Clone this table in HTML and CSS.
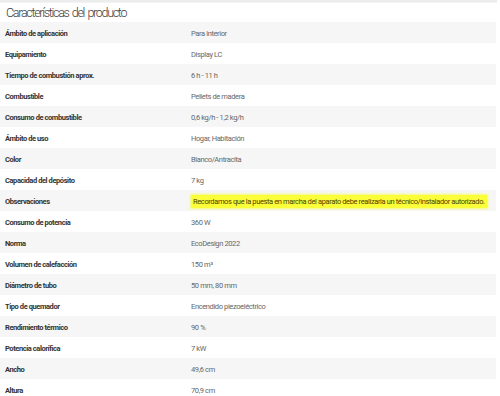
FILE: index.html
```html
<!DOCTYPE html>
<html lang="es">
<head>
<meta charset="utf-8">
<title>Características del producto</title>
<link rel="stylesheet" href="styles.css">
</head>
<body>
<div class="topline"></div>
<h2 class="title">Características del producto</h2>
<div class="specs">
  <div class="row"><span class="k">Ámbito de aplicación</span><span class="v">Para interior</span></div>
  <div class="row"><span class="k">Equipamiento</span><span class="v">Display LC</span></div>
  <div class="row"><span class="k">Tiempo de combustión aprox.</span><span class="v">6 h - 11 h</span></div>
  <div class="row"><span class="k">Combustible</span><span class="v">Pellets de madera</span></div>
  <div class="row"><span class="k">Consumo de combustible</span><span class="v">0,6 kg/h - 1,2 kg/h</span></div>
  <div class="row"><span class="k">Ámbito de uso</span><span class="v">Hogar, Habitación</span></div>
  <div class="row"><span class="k">Color</span><span class="v">Blanco/Antracita</span></div>
  <div class="row"><span class="k">Capacidad del depósito</span><span class="v">7 kg</span></div>
  <div class="row"><span class="k">Observaciones</span><span class="v"><mark class="hl">Recordamos que la puesta en marcha del aparato debe realizarla un técnico/instalador autorizado.</mark></span></div>
  <div class="row"><span class="k">Consumo de potencia</span><span class="v">360 W</span></div>
  <div class="row"><span class="k">Norma</span><span class="v">EcoDesign 2022</span></div>
  <div class="row"><span class="k">Volumen de calefacción</span><span class="v">150 m³</span></div>
  <div class="row"><span class="k">Diámetro de tubo</span><span class="v">50 mm, 80 mm</span></div>
  <div class="row"><span class="k">Tipo de quemador</span><span class="v">Encendido piezoeléctrico</span></div>
  <div class="row"><span class="k">Rendimiento térmico</span><span class="v">90 %</span></div>
  <div class="row"><span class="k">Potencia calorífica</span><span class="v">7 kW</span></div>
  <div class="row"><span class="k">Ancho</span><span class="v">49,6 cm</span></div>
  <div class="row"><span class="k">Altura</span><span class="v">70,9 cm</span></div>
</div>
</body>
</html>
```
FILE: styles.css
```css
html, body {
  margin: 0;
  padding: 0;
  background: #ffffff;
  overflow: hidden;
}
body {
  width: 500px;
  height: 396px;
  font-family: Roboto, "Open Sans", sans-serif;
}
.topline {
  width: 497px;
  height: 2px;
  background: #ececec;
  box-shadow: 0 1px 1px rgba(0,0,0,0.05);
}
.title {
  margin: 0;
  height: 20px;
  padding-left: 6px;
  font-family: Roboto, sans-serif;
  font-weight: 300;
  font-size: 12.5px;
  line-height: 21px;
  color: #3d3d3d;
  letter-spacing: -1.3px;
  word-spacing: 1.5px;
}
.specs {
  width: 496px;
}
.row {
  display: grid;
  grid-template-columns: 186px 1fr;
  align-items: center;
  height: 21px;
  box-sizing: border-box;
  padding-left: 5px;
  padding-top: 1px;
  font-size: 7.5px;
}
.row:nth-child(odd) {
  background: #f6f6f6;
}
.k {
  font-weight: 700;
  color: #333333;
  letter-spacing: -0.42px;
}
.v {
  font-weight: 400;
  color: #666666;
  letter-spacing: -0.38px;
}
.hl {
  background: #fbff3a;
  color: #4f3c00;
  padding: 2px 2px;
  box-shadow: 0 0 2px 1px rgba(250,255,60,0.7);
  white-space: nowrap;
}
```
